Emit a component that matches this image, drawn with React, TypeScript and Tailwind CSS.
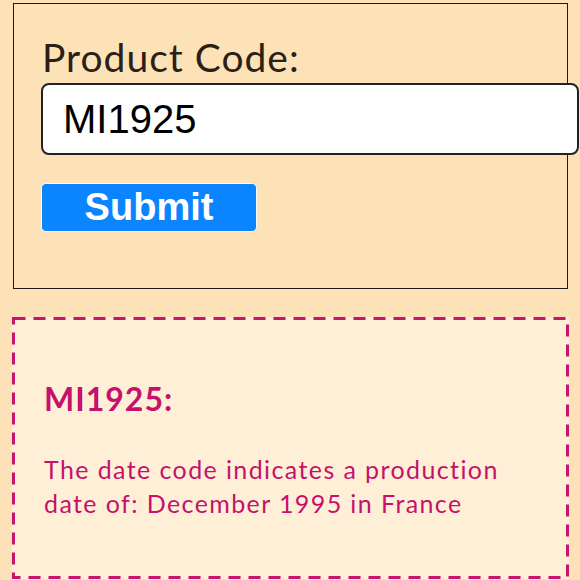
import React from "react";

export default function App() {
  return (
    <div className="w-[580px] h-[580px] overflow-hidden bg-[#fde2b8] pt-[3px] pl-[13px]">
      <div className="w-[555px] h-[286px] border border-[#1c1a17] bg-[#fde2b8] pl-[27px] pt-[30px]">
        <div
          className="text-[39px] leading-[1.2] tracking-[1px] text-[#2b2016] pl-[1px]"
          style={{ fontFamily: "Lato, 'Noto Sans', sans-serif" }}
        >
          Product Code:
        </div>
        <div
          className="mt-[2px] w-[538px] h-[72px] border-2 border-[#222] rounded-[8px] bg-white flex items-center pl-[20px] text-[40px] text-black"
          style={{ fontFamily: "'Liberation Sans', Arial, sans-serif" }}
        >
          MI1925
        </div>
        <button
          className="mt-[28px] w-[216px] h-[49px] bg-[#0a84ff] border border-[#f4f8ff] rounded-[5px] text-white font-bold text-[38px] leading-none flex items-center justify-center"
          style={{ fontFamily: "'Liberation Sans', Arial, sans-serif" }}
        >
          Submit
        </button>
      </div>
      <div
        className="relative mt-[28px] -ml-[1px] w-[557px] h-[262px] bg-[#feefd6] pl-[32px] pt-[63px] text-[#c5116c]"
        style={{ fontFamily: "Lato, 'Noto Sans', sans-serif" }}
      >
        <svg className="absolute inset-0" width="557" height="262">
          <rect
            x="1.5"
            y="1.5"
            width="554"
            height="259"
            fill="none"
            stroke="#c8136f"
            strokeWidth="3"
            strokeDasharray="12 8"
          />
        </svg>
        <div className="text-[32px] leading-[1.2] font-bold tracking-[1px]">MI1925:</div>
        <div className="mt-[34px] text-[25px] leading-[34px] tracking-[1.4px]">
          The date code indicates a production
          <br />
          date of: December 1995 in France
        </div>
      </div>
    </div>
  );
}
